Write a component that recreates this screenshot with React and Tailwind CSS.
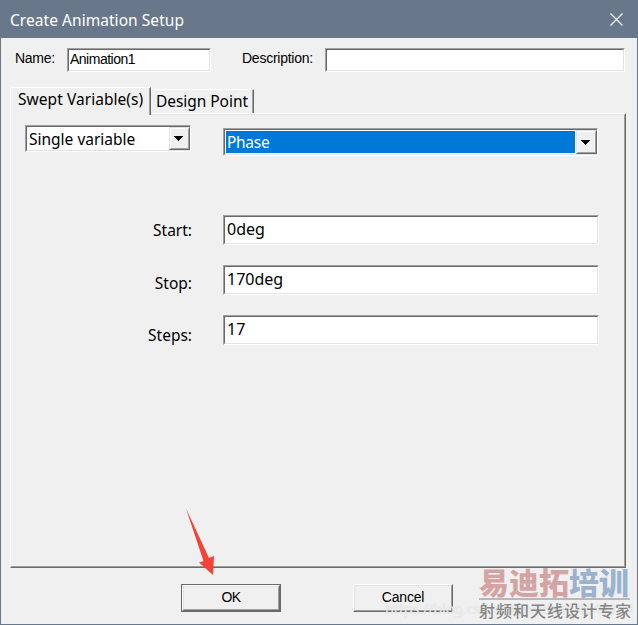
import React, { useState } from "react";

const sunken =
  "border border-t-[#a0a0a0] border-l-[#a0a0a0] border-r-white border-b-white";
const sunkenInner =
  "border border-t-[#696969] border-l-[#696969] border-r-[#e3e3e3] border-b-[#e3e3e3]";

function Field({ className, value, textClass = "" }) {
  return (
    <div className={`${sunken} ${className}`}>
      <div className={`${sunkenInner} h-full bg-white`}>
        <input
          className={`block w-full bg-transparent outline-none ${textClass}`}
          defaultValue={value}
        />
      </div>
    </div>
  );
}

function Combo({ className, value, selected, textClass }) {
  return (
    <div className={`${sunken} ${className}`}>
      <div className="flex h-full border-t border-b border-l border-t-[#696969] border-b-[#e3e3e3] border-l-[#696969] bg-white">
        <div className={`flex-1 whitespace-nowrap ${selected ? "m-px bg-[#0078d7] text-white" : ""}`}>
          <div className={textClass}>{value}</div>
        </div>
        <button className="w-[21px] border border-t-[#e3e3e3] border-l-[#e3e3e3] border-r-[#696969] border-b-[#696969] bg-[#f0f0f0]">
          <span className="flex h-full items-center border border-t-white border-l-white border-r-[#a0a0a0] border-b-[#a0a0a0] pl-[3px]">
            <svg width="9" height="5" viewBox="0 0 9 5" shapeRendering="crispEdges">
              <path d="M0 0h9v1H8v1H7v1H6v1H5v1H4V4H3V3H2V2H1V1H0z" />
            </svg>
          </span>
        </button>
      </div>
    </div>
  );
}

function Row({ label, value, labelClass }) {
  return (
    <div className="flex h-[50px]">
      <label className={`w-[181px] text-right text-[15.5px] ${labelClass}`}>{label}</label>
      <Field className="ml-[31px] h-[30px] w-[376px]" value={value} textClass="h-[23px] pl-[2px]" />
    </div>
  );
}

function App() {
  const [tab, setTab] = useState("swept");

  return (
    <div className="relative flex h-[625px] w-[638px] flex-col overflow-hidden border border-[#68788c] bg-[#f0f0f0] font-['Noto_Sans','Noto_Sans_CJK_SC',sans-serif] text-[16px] leading-[22px] text-black">
      {/* Title bar */}
      <div className="flex h-[37px] shrink-0 items-center justify-between bg-[#68778a] pr-[14px] pl-[9px] text-white">
        <span className="text-[15.5px] tracking-[0.05px]">Create Animation Setup</span>
        <svg width="13" height="13" viewBox="0 0 13 13" stroke="#fff" strokeWidth="1.2">
          <path d="M.5.5l12 12M12.5.5l-12 12" />
        </svg>
      </div>

      {/* Name / description */}
      <div className="mt-[10px] flex h-[24px] shrink-0 pl-[14px] font-['Liberation_Sans',Arial,sans-serif] text-[14px] leading-[21px]">
        <label className="w-[52px] tracking-[-0.3px]">Name:</label>
        <Field className="h-[24px] w-[144px]" value="Animation1" textClass="h-[19px] pl-px tracking-[-0.5px]" />
        <label className="ml-[31px] w-[83px] tracking-[-0.25px]">Description:</label>
        <Field className="h-[24px] w-[300px]" value="" textClass="h-[19px]" />
      </div>

      {/* Tabs */}
      <div className="mt-[14px] ml-[9px] flex h-[27px] shrink-0 items-end text-[15.5px]">
        <button
          className="relative z-10 -mb-[2px] h-[28px] w-[141px] rounded-tl-[2px] border-t border-r border-l border-t-white border-r-[#696969] border-l-white bg-[#f0f0f0] pb-[5px] pl-[7px] text-left tracking-[0.05px] whitespace-nowrap shadow-[inset_-1px_0_0_#a0a0a0]"
          onClick={() => setTab("swept")}
        >
          Swept Variable(s)
        </button>
        <button
          className="h-[24px] w-[103px] border-t border-r border-t-white border-r-[#696969] pb-px pl-[5px] text-left tracking-[-0.05px] whitespace-nowrap shadow-[inset_-1px_0_0_#a0a0a0]"
          onClick={() => setTab("design")}
        >
          Design Point
        </button>
      </div>
      <div className="ml-[9px] h-[455px] w-[616px] shrink-0 border-t border-r border-b border-l border-t-white border-r-[#696969] border-b-[#696969] border-l-white">
        <div className="h-full border-t border-r border-b border-t-[#e3e3e3] border-r-[#a0a0a0] border-b-[#a0a0a0]">
          <div className="flex pl-[14px] text-[15.5px]">
            <Combo className="mt-[10px] h-[27px] w-[166px]" value="Single variable" textClass="pl-[2px] leading-[25px]" />
            <Combo className="mt-[13px] ml-[32px] h-[28px] w-[375px]" value="Phase" selected textClass="pl-px leading-[22px] tracking-[-0.3px]" />
          </div>
          <div className="mt-[59px]">
            <Row label="Start:" value="0deg" labelClass="pt-[4px]" />
            <Row label="Stop:" value="170deg" labelClass="pt-[7px]" />
            <Row label="Steps:" value="17" labelClass="pt-[9px]" />
          </div>
        </div>
      </div>

      {/* Buttons */}
      <div className="mt-[16px] flex shrink-0 pl-[180px] font-['Liberation_Sans',Arial,sans-serif] text-[14px]">
        <button className="h-[28px] w-[100px] border border-[#696969]">
          <span className="block h-full border border-t-white border-l-white border-r-[#696969] border-b-[#696969]">
            <span className="block h-full border border-t-[#e3e3e3] border-l-[#e3e3e3] border-r-[#a0a0a0] border-b-[#a0a0a0] leading-[21px] tracking-[-0.5px]">OK</span>
          </span>
        </button>
        <button className="ml-[72px] h-[28px] w-[100px] border border-t-white border-l-white border-r-[#696969] border-b-[#696969]">
          <span className="block h-full border border-t-[#e3e3e3] border-l-[#e3e3e3] border-r-[#a0a0a0] border-b-[#a0a0a0] leading-[23px] tracking-[-0.2px]">Cancel</span>
        </button>
      </div>

      {/* Arrow over the dialog */}
      <svg className="absolute top-[506px] left-[184px]" width="32" height="70" viewBox="0 0 32 70">
        <path d="M.8 1L24 51L29 49L28 68L14 55.5L18.5 54Z" fill="#f44336" />
      </svg>

      {/* Watermarks */}
      <div className="absolute top-[596px] left-[384px] text-[14.5px] tracking-[-0.2px] whitespace-nowrap text-white/60 [text-shadow:0_0_1px_#c8c8c8]">
        https://blog.csdn.net/weixin_4542104
      </div>
      <div className="absolute top-[563px] left-[478px] w-[153px] font-['Noto_Sans_CJK_SC',sans-serif]">
        <div className="h-[36px] w-[151px] border-b-2 border-[#b8b8b8] text-[30px] leading-[34px] font-black whitespace-nowrap text-[#d6a3a5]">
          易迪拓<span className="text-[#9bb2cf]">培训</span>
        </div>
        <div className="text-[16px] leading-[20px] font-medium tracking-[1px] whitespace-nowrap text-[#858585]">
          射频和天线设计专家
        </div>
      </div>
    </div>
  );
}

export default App;
